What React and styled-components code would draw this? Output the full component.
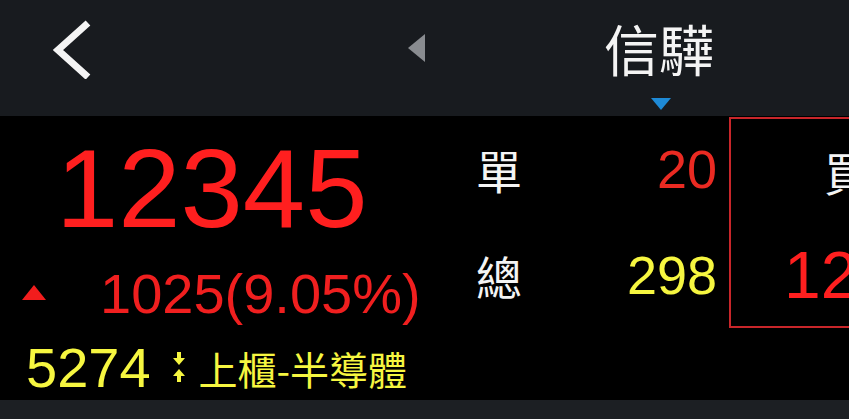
import React from "react"
import styled, { createGlobalStyle } from "styled-components"

const GlobalStyle = createGlobalStyle`
  html, body {
    margin: 0;
    padding: 0;
    background: #1c1f23;
  }
  body {
    font-family: "Liberation Sans", "Noto Sans CJK TC", sans-serif;
  }
`

const Screen = styled.div`
  width: 849px;
  height: 419px;
  overflow: hidden;
  display: flex;
  flex-direction: column;
  background: #1c1f23;
`

const Header = styled.header`
  height: 116px;
  flex-shrink: 0;
  display: flex;
  align-items: flex-start;
  background: #181b1f;
`

const BackButton = styled.button`
  margin: 19px 0 0 50px;
  padding: 0;
  width: 44px;
  height: 60px;
  border: 0;
  background: none;
  display: flex;
`

const PrevArrow = styled.span`
  margin: 34px 0 0 314px;
  width: 0;
  height: 0;
  border-top: 14px solid transparent;
  border-bottom: 14px solid transparent;
  border-right: 17px solid #898c90;
`

const TitleBlock = styled.div`
  margin: 20px 0 0 179px;
  display: flex;
  flex-direction: column;
  align-items: center;
`

const Title = styled.h1`
  margin: 0;
  font-family: "Noto Sans CJK TC", sans-serif;
  font-weight: 400;
  font-size: 55px;
  line-height: 54px;
  color: #f4f4f4;
`

const PageMark = styled.span`
  margin: 24px 0 0 4px;
  width: 0;
  height: 0;
  border-left: 10px solid transparent;
  border-right: 10px solid transparent;
  border-top: 12px solid #1e8ad6;
`

const Body = styled.main`
  height: 284px;
  flex-shrink: 0;
  display: flex;
  background: #000;
  overflow: hidden;
`

const QuoteCol = styled.section`
  width: 445px;
  flex-shrink: 0;
  padding-left: 22px;
  box-sizing: border-box;
  display: flex;
  flex-direction: column;
`

const Price = styled.div`
  margin-top: 17px;
  padding-left: 34px;
  font-size: 112px;
  line-height: 112px;
  color: #ff1f1f;
`

const ChangeRow = styled.div`
  margin-top: 21px;
  height: 56px;
  display: flex;
  align-items: center;
`

const UpMark = styled.span`
  margin-top: -3px;
  width: 0;
  height: 0;
  border-left: 12.5px solid transparent;
  border-right: 12.5px solid transparent;
  border-bottom: 15px solid #f21d1d;
`

const Change = styled.span`
  margin-left: 54px;
  font-size: 56px;
  line-height: 56px;
  color: #f01f1f;
`

const InfoRow = styled.div`
  margin-top: 18px;
  height: 55px;
  display: flex;
  align-items: center;
`

const Code = styled.span`
  margin-left: 4px;
  font-size: 56px;
  line-height: 55px;
  color: #f6f640;
`

const SqueezeIcon = styled.svg`
  margin-left: 22px;
  flex-shrink: 0;
`

const Sector = styled.span`
  margin-left: 14px;
  font-family: "Noto Sans CJK TC", sans-serif;
  font-size: 39px;
  line-height: 38px;
  color: #f6f640;
`

const StatCol = styled.section`
  width: 284px;
  flex-shrink: 0;
  padding: 0 12px 0 31px;
  box-sizing: border-box;
  display: grid;
  grid-template-rows: 106px 106px;
`

const StatRow = styled.div`
  display: flex;
  align-items: center;
  justify-content: space-between;
`

const Label = styled.span`
  font-family: "Noto Sans CJK TC", sans-serif;
  font-size: 46px;
  line-height: 46px;
  color: #f4f4f4;
`

const StatValue = styled.span`
  font-size: 54px;
  line-height: 54px;
  color: ${p => p.color};
`

const BidBox = styled.section`
  margin-top: 1px;
  width: 300px;
  height: 211px;
  flex-shrink: 0;
  box-sizing: border-box;
  border: 2px solid #c8262a;
  display: grid;
  grid-template-rows: 104px 103px;
`

const BidRow = styled.div`
  display: flex;
  align-items: center;
  padding-left: ${p => p.indent}px;
  white-space: nowrap;
`

const BidPrice = styled.span`
  font-size: 66px;
  line-height: 66px;
  color: #ff1f1f;
`

const Footer = styled.footer`
  flex: 1;
  background: #1c1f23;
`

const App = () => (
  <>
    <GlobalStyle />
    <Screen>
      <Header>
        <BackButton aria-label="back">
          <svg width="44" height="60" viewBox="0 0 44 60">
            <polyline
              points="38,4 8,31 38,58"
              fill="none"
              stroke="#f4f4f4"
              strokeWidth="7"
            />
          </svg>
        </BackButton>
        <PrevArrow />
        <TitleBlock>
          <Title>信驊</Title>
          <PageMark />
        </TitleBlock>
      </Header>
      <Body>
        <QuoteCol>
          <Price>12345</Price>
          <ChangeRow>
            <UpMark />
            <Change>1025(9.05%)</Change>
          </ChangeRow>
          <InfoRow>
            <Code>5274</Code>
            <SqueezeIcon width="12" height="32" viewBox="0 0 12 32">
              <rect x="4" y="0" width="4" height="6" fill="#f6f640" />
              <polygon points="0,6 12,6 6,13" fill="#f6f640" />
              <polygon points="6,17 12,24 0,24" fill="#f6f640" />
              <rect x="4" y="24" width="4" height="6" fill="#f6f640" />
            </SqueezeIcon>
            <Sector>上櫃-半導體</Sector>
          </InfoRow>
        </QuoteCol>
        <StatCol>
          <StatRow>
            <Label>單</Label>
            <StatValue color="#ea2a22">20</StatValue>
          </StatRow>
          <StatRow>
            <Label>總</Label>
            <StatValue color="#f6f640">298</StatValue>
          </StatRow>
        </StatCol>
        <BidBox>
          <BidRow indent={93}>
            <Label>買進</Label>
          </BidRow>
          <BidRow indent={53}>
            <BidPrice>12345</BidPrice>
          </BidRow>
        </BidBox>
      </Body>
      <Footer />
    </Screen>
  </>
)

export default App
